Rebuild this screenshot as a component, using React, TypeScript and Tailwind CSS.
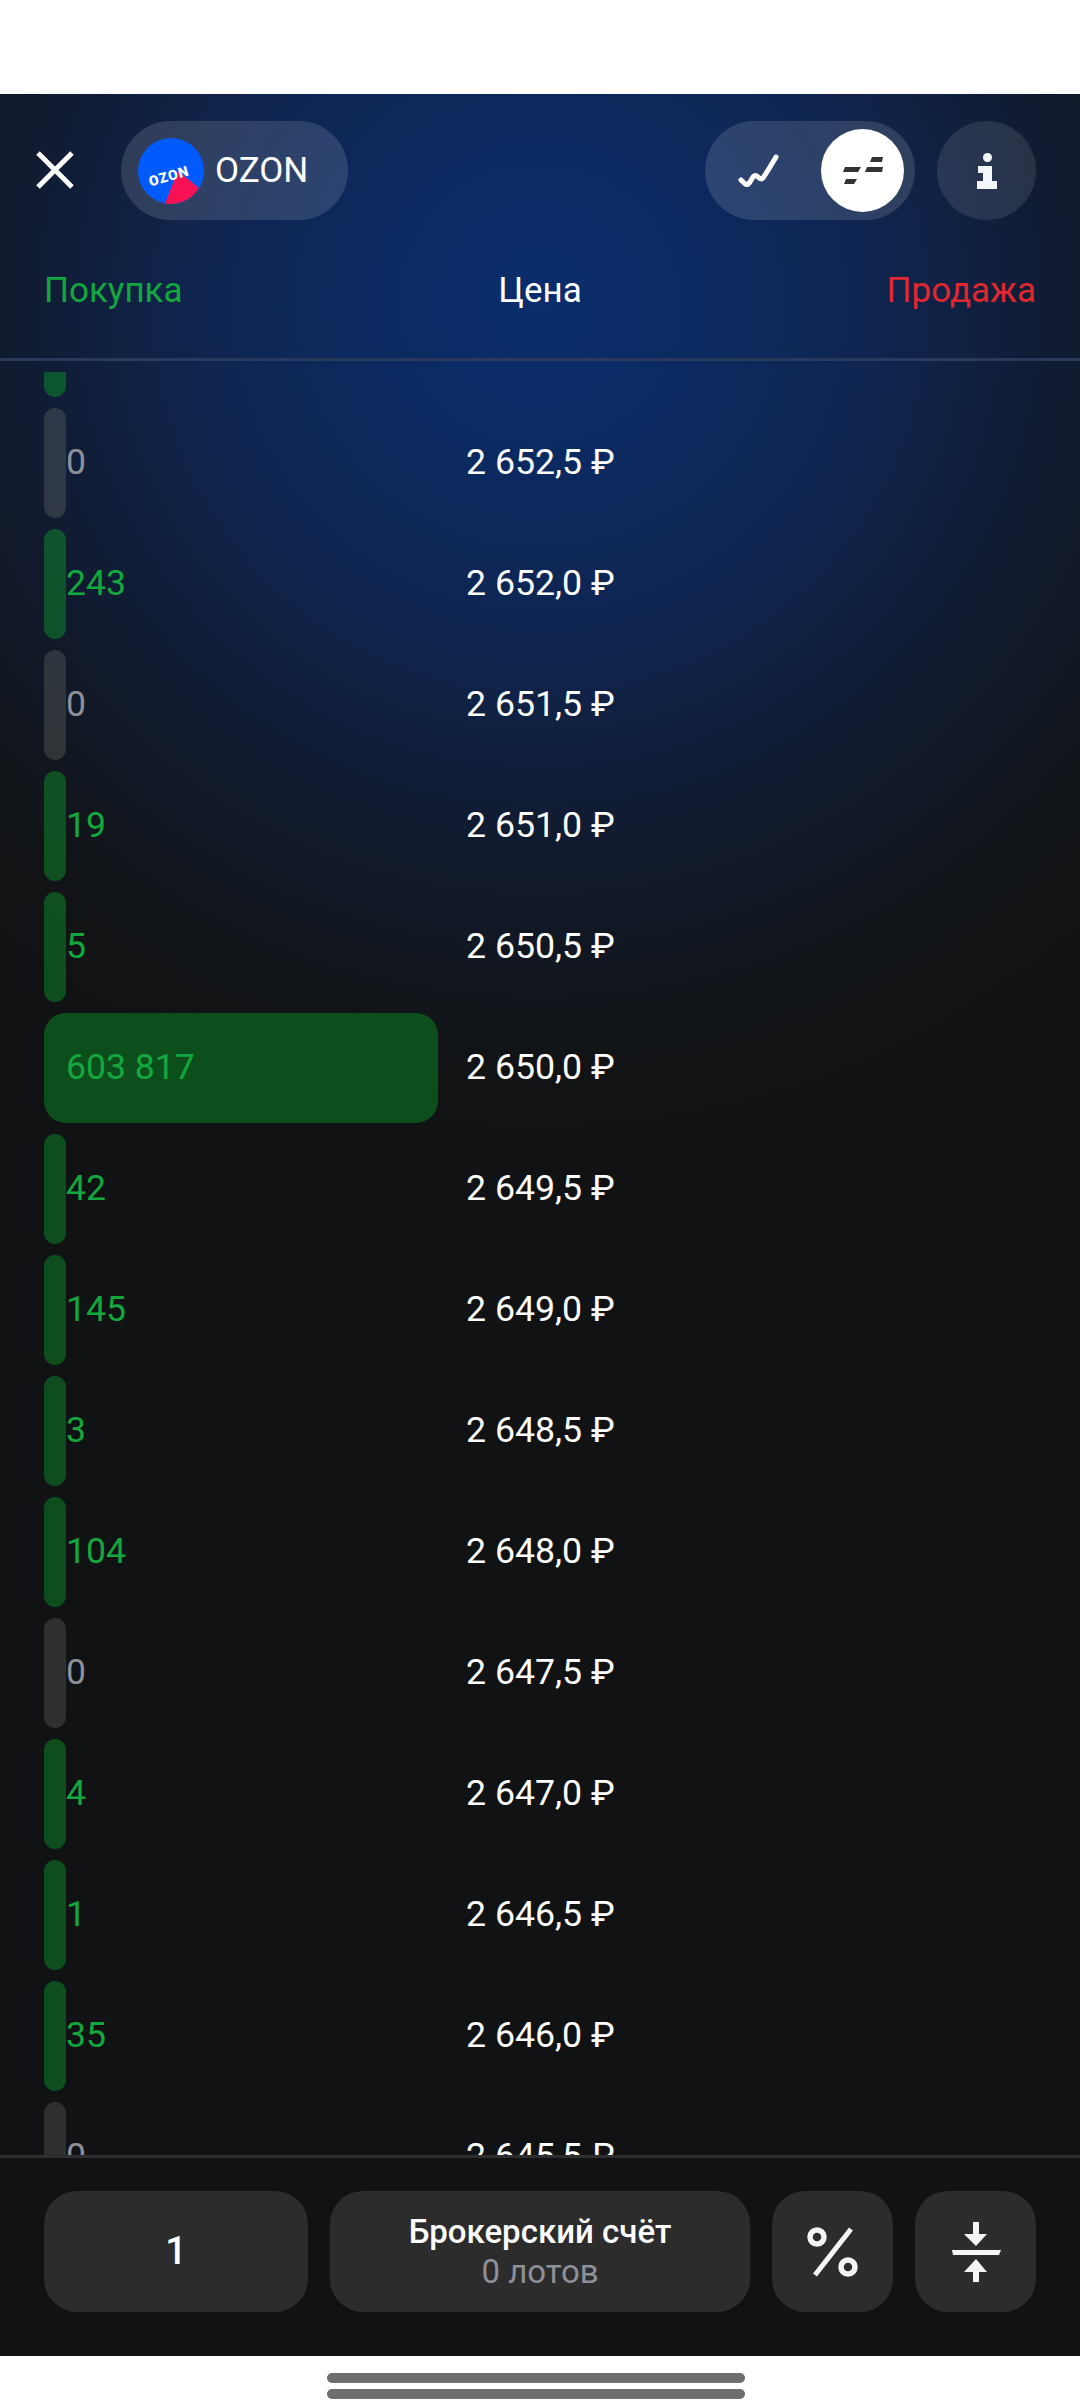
const rows: [string, string][] = [
  ["", "2 653,0 ₽"],
  ["0", "2 652,5 ₽"],
  ["243", "2 652,0 ₽"],
  ["0", "2 651,5 ₽"],
  ["19", "2 651,0 ₽"],
  ["5", "2 650,5 ₽"],
  ["603 817", "2 650,0 ₽"],
  ["42", "2 649,5 ₽"],
  ["145", "2 649,0 ₽"],
  ["3", "2 648,5 ₽"],
  ["104", "2 648,0 ₽"],
  ["0", "2 647,5 ₽"],
  ["4", "2 647,0 ₽"],
  ["1", "2 646,5 ₽"],
  ["35", "2 646,0 ₽"],
  ["0", "2 645,5 ₽"],
];

function Row({ qty, price }: { qty: string; price: string }) {
  const zero = qty === "0";
  const big = qty === "603 817";
  return (
    <div className="relative flex h-[110px] shrink-0 items-center">
      <div
        className={
          zero
            ? "absolute left-0 top-0 h-full w-[22px] rounded-[11px] bg-[#8a8a80]/25"
            : big
              ? "absolute left-0 top-0 h-full w-[394px] rounded-[22px] bg-[#0d4f1c]"
              : "absolute left-0 top-0 h-full w-[22px] rounded-[11px] bg-[#0a9a2c]/45"
        }
      />
      <div className={`relative ml-[22px] w-[400px] text-[35.6px] ${zero ? "text-[#8e9099]" : "text-[#12a83e]"}`}>
        {qty}
      </div>
      <div className="relative text-[35.7px] text-white">{price}</div>
    </div>
  );
}

function Logo() {
  return (
    <svg width="66" height="66" viewBox="0 0 66 66">
      <circle cx="33" cy="33" r="33" fill="#005bff" />
      <path d="M40 33L61 50A33 33 0 0 1 27 65.5Z" fill="#f91155" />
      <text
        x="31"
        y="43"
        fill="#fff"
        fontSize="14"
        fontWeight="900"
        letterSpacing="1"
        textAnchor="middle"
        transform="rotate(-16 31 38)"
        fontFamily="Roboto, sans-serif"
      >
        OZON
      </text>
    </svg>
  );
}

export default function App() {
  return (
    <div className="flex h-[2400px] w-[1080px] flex-col overflow-hidden bg-white font-['Roboto',sans-serif]">
      <div className="h-[94px] shrink-0 bg-white" />
      <main className="flex h-[2262px] shrink-0 flex-col bg-[#111213] bg-[radial-gradient(circle_830px_at_540px_210px,#0a2d6c_0%,#0b2a62_18%,#0f2550_40%,#111c33_62%,#111417_88%,#111213_100%)]">
        <header className="flex h-[126px] shrink-0 items-end justify-between pl-[36px] pr-[44px]">
          <div className="flex items-center">
            <svg width="38" height="38" viewBox="0 0 38 38" className="mb-[1px]" fill="none">
              <path d="M2 2L36 36M36 2L2 36" stroke="#fff" strokeWidth="5" />
            </svg>
            <div className="ml-[47px] flex h-[99px] w-[227px] items-center rounded-full bg-white/[0.13] pl-[17px]">
              <Logo />
              <span className="ml-[11px] pt-[2px] text-[35px] text-white">OZON</span>
            </div>
          </div>
          <div className="flex items-center gap-[22px]">
            <div className="flex h-[99px] w-[210px] items-center justify-between rounded-full bg-white/[0.13] pl-[33px] pr-[11px]">
              <svg width="42" height="34" viewBox="0 0 42 34" fill="none">
                <path
                  d="M3 26Q6 29 8 30.5Q10 31 12 28L15 23Q17 20 20 23Q23 26 25 24Q31 15 38 3"
                  stroke="#fff"
                  strokeWidth="5"
                  strokeLinecap="round"
                  strokeLinejoin="round"
                />
              </svg>
              <div className="flex h-[83px] w-[83px] items-center justify-center rounded-full bg-white">
                <svg width="42" height="30" viewBox="0 0 42 30" fill="#333">
                  <path d="M3 11H19L16 16H1Z" />
                  <path d="M25 11H41L40 16H23Z" />
                  <path d="M4 23H15L12 28H2Z" />
                  <path d="M30 1H41L40 6H28Z" />
                </svg>
              </div>
            </div>
            <div className="flex h-[99px] w-[99px] items-center justify-center rounded-full bg-white/[0.1]">
              <svg width="22" height="36" viewBox="0 0 22 36" fill="#f3f6fb">
                <circle cx="11.5" cy="4.5" r="4.5" />
                <path d="M2 13H16V28H21V36H1V28H7V20H2Z" />
              </svg>
            </div>
          </div>
        </header>
        <div className="grid h-[141px] shrink-0 grid-cols-3 items-center border-b-[3px] border-[#2a3a5c] px-[44px] pt-[5px] text-[35px]">
          <span className="text-[#12a83e]">Покупка</span>
          <span className="text-center text-white">Цена</span>
          <span className="text-right text-[#e0282e]">Продажа</span>
        </div>
        <div className="mt-[11px] flex h-[1783px] shrink-0 flex-col gap-[11px] overflow-hidden px-[44px]">
          <div className="-mt-[85px] flex flex-col gap-[11px]">
            {rows.map((r) => (
              <Row key={r[1]} qty={r[0]} price={r[1]} />
            ))}
          </div>
        </div>
        <footer className="flex flex-1 gap-[22px] border-t-[3px] border-[#2e2e2e] bg-[#111213] px-[44px] pt-[33px]">
          <div className="flex h-[121px] w-[264px] items-center justify-center rounded-[33px] bg-[#2c2c2d] text-[38px] font-medium text-white">
            1
          </div>
          <div className="flex h-[121px] w-[420px] flex-col items-center justify-center rounded-[33px] bg-[#2c2c2d]">
            <span className="text-[33px] font-medium leading-[40px] text-white">Брокерский счёт</span>
            <span className="text-[33px] leading-[40px] text-[#8e9099]">0 лотов</span>
          </div>
          <div className="flex h-[121px] w-[121px] items-center justify-center rounded-[33px] bg-[#2c2c2d]">
            <svg width="52" height="50" viewBox="0 0 52 50" fill="none" stroke="#f4f5f5" strokeWidth="5.5">
              <circle cx="10" cy="10" r="7" />
              <circle cx="41" cy="40" r="7" />
              <path d="M44 2L8 48" strokeWidth="5" />
            </svg>
          </div>
          <div className="flex h-[121px] w-[121px] items-center justify-center rounded-[33px] bg-[#2c2c2d]">
            <svg width="52" height="62" viewBox="0 0 52 62" fill="#f4f5f5">
              <path d="M23 1H29V13H37L26 25L14 13H23Z" />
              <path d="M2 29H51L49 34H3Z" />
              <path d="M26 38L37 51H29V61H23V51H14Z" />
            </svg>
          </div>
        </footer>
      </main>
      <div className="flex flex-1 flex-col items-center gap-[6px] pr-[8px] pt-[17px]">
        <div className="h-[10px] w-[418px] rounded-full bg-[#6e6e6e]" />
        <div className="h-[10px] w-[418px] rounded-full bg-[#6e6e6e]" />
      </div>
    </div>
  );
}
